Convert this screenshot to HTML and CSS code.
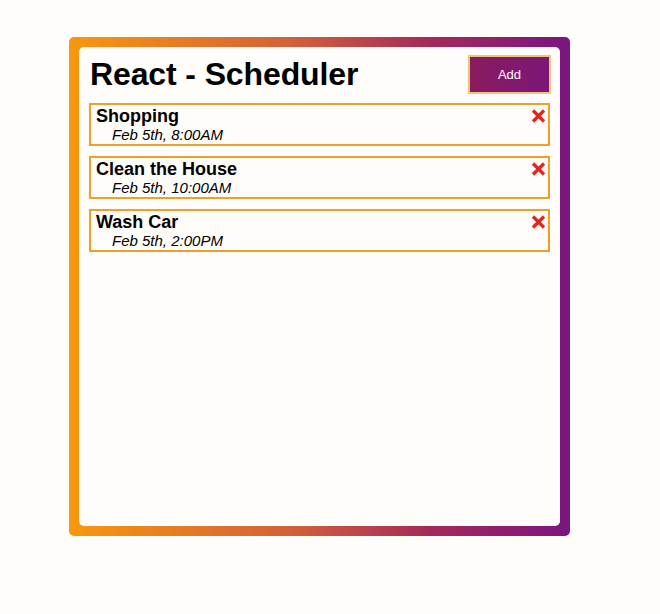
FILE: index.html
```html
<!DOCTYPE html>
<html>
<head>
<meta charset="utf-8">
<link rel="stylesheet" href="styles.css">
</head>
<body>
<div class="frame">
  <div class="panel">
    <div class="header">
      <h1 class="title">React - Scheduler</h1>
      <button class="add-btn">Add</button>
    </div>
    <ul class="list">
      <li class="item">
        <div class="item-text">
          <h3 class="item-title">Shopping</h3>
          <p class="item-date">Feb 5th, 8:00AM</p>
        </div>
        <svg class="del" viewBox="0 0 15 14" width="15" height="14"><path d="M2 1.5 L13 12.5 M13 1.5 L2 12.5" stroke="#e3261d" stroke-width="3.4" stroke-linecap="butt"/></svg>
      </li>
      <li class="item">
        <div class="item-text">
          <h3 class="item-title">Clean the House</h3>
          <p class="item-date">Feb 5th, 10:00AM</p>
        </div>
        <svg class="del" viewBox="0 0 15 14" width="15" height="14"><path d="M2 1.5 L13 12.5 M13 1.5 L2 12.5" stroke="#e3261d" stroke-width="3.4" stroke-linecap="butt"/></svg>
      </li>
      <li class="item">
        <div class="item-text">
          <h3 class="item-title">Wash Car</h3>
          <p class="item-date">Feb 5th, 2:00PM</p>
        </div>
        <svg class="del" viewBox="0 0 15 14" width="15" height="14"><path d="M2 1.5 L13 12.5 M13 1.5 L2 12.5" stroke="#e3261d" stroke-width="3.4" stroke-linecap="butt"/></svg>
      </li>
    </ul>
  </div>
</div>
</body>
</html>
```

FILE: styles.css
```css
html, body {
  margin: 0;
  padding: 0;
  background: #fffdfa;
  font-family: "Liberation Sans", Arial, sans-serif;
}
.frame {
  margin: 37px 0 0 69px;
  width: 481px;
  height: 479px;
  padding: 10px;
  border-radius: 5px;
  background: linear-gradient(90deg, #f7980e 0%, #d0603a 45%, #a42a5a 72%, #7a1581 100%);
}
.panel {
  height: 100%;
  box-sizing: border-box;
  background: #fffdfa;
  border-radius: 5px;
  padding: 8px 10px 10px 10px;
}
.header {
  display: flex;
  justify-content: space-between;
  align-items: center;
  height: 39px;
  margin-bottom: 9px;
}
.title {
  margin: 0 0 0 1px;
  font-size: 32px;
  font-weight: bold;
  letter-spacing: -0.12px;
  color: #000;
  line-height: 39px;
}
.add-btn {
  width: 83px;
  height: 39px;
  margin-right: -1px;
  box-sizing: border-box;
  border: 2px solid #f4c27c;
  background: linear-gradient(90deg, #8a1b5f, #7b1779);
  color: #fff;
  font-family: "Liberation Sans", Arial, sans-serif;
  font-size: 13px;
  padding: 0;
}
.list {
  list-style: none;
  margin: 0;
  padding: 0;
  display: flex;
  flex-direction: column;
  gap: 10px;
}
.item {
  display: flex;
  justify-content: space-between;
  align-items: flex-start;
  border: 2px solid #ef9f2c;
  padding: 1px 2px 1px 5px;
  height: 43px;
  box-sizing: border-box;
}
.item-title {
  margin: 0;
  font-size: 18px;
  font-weight: bold;
  line-height: 20px;
  color: #000;
}
.item-date {
  margin: 0;
  padding-left: 16px;
  font-size: 15px;
  font-style: italic;
  line-height: 17px;
  color: #000;
}
.del {
  margin-top: 3px;
  flex: none;
}
```
